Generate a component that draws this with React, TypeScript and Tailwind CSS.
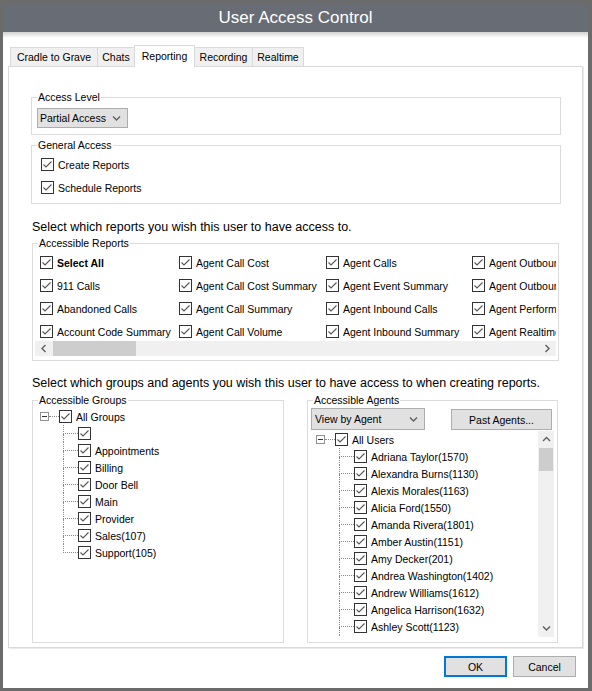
import React from "react";

const GROUPS = ["", "Appointments", "Billing", "Door Bell", "Main", "Provider", "Sales(107)", "Support(105)"];

const AGENTS = [
  "Adriana Taylor(1570)",
  "Alexandra Burns(1130)",
  "Alexis Morales(1163)",
  "Alicia Ford(1550)",
  "Amanda Rivera(1801)",
  "Amber Austin(1151)",
  "Amy Decker(201)",
  "Andrea Washington(1402)",
  "Andrew Williams(1612)",
  "Angelica Harrison(1632)",
  "Ashley Scott(1123)",
  "Austin Bennett(1144)",
];

// columns of the report grid, read top to bottom
const REPORTS = [
  ["Select All", "911 Calls", "Abandoned Calls", "Account Code Summary"],
  ["Agent Call Cost", "Agent Call Cost Summary", "Agent Call Summary", "Agent Call Volume"],
  ["Agent Calls", "Agent Event Summary", "Agent Inbound Calls", "Agent Inbound Summary"],
  ["Agent Outbound Calls", "Agent Outbound Summary", "Agent Performance", "Agent Realtime"],
];

function Box() {
  return (
    <svg width="13" height="13" viewBox="0 0 13 13" className="shrink-0">
      <rect x="0.5" y="0.5" width="12" height="12" fill="#fff" stroke="#333" />
      <path d="M2.5 6.5 L5 9 L10.5 3.5" fill="none" stroke="#555" strokeWidth="1.1" />
    </svg>
  );
}

function Check({ label, bold }: { label: string; bold?: boolean }) {
  return (
    <div className="flex items-center gap-[4px] h-[23px] whitespace-nowrap">
      <Box />
      <span className={bold ? "font-bold" : ""}>{label}</span>
    </div>
  );
}

function Chevron({ dir }: { dir: "down" | "up" | "left" | "right" }) {
  const d = {
    down: "M1 1.5 L4.5 5 L8 1.5",
    up: "M1 5 L4.5 1.5 L8 5",
    left: "M5.5 1 L2 4.5 L5.5 8",
    right: "M2.5 1 L6 4.5 L2.5 8",
  }[dir];
  const w = dir === "down" || dir === "up" ? 9 : 8;
  const h = dir === "down" || dir === "up" ? 7 : 9;
  return (
    <svg width={w} height={h} viewBox={`0 0 ${w} ${h}`} className="shrink-0">
      <path d={d} fill="none" stroke="#606060" strokeWidth="1.4" />
    </svg>
  );
}

function Expander() {
  return (
    <div className="w-[9px] h-[9px] border border-[#919191] bg-white flex items-center justify-center shrink-0">
      <div className="w-[5px] h-px bg-[#333]" />
    </div>
  );
}

function Tree({ root, items, lastOpen }: { root: string; items: string[]; lastOpen?: boolean }) {
  return (
    <div className="pl-[5px]">
      <div className="flex items-center h-[17px] whitespace-nowrap">
        <Expander />
        <div className="w-[10px] border-t border-dotted border-[#8a8a8a]" />
        <Box />
        <span className="ml-[4px]">{root}</span>
      </div>
      <div className="pl-[23px]">
        {items.map((name, i) => {
          const last = i === items.length - 1 && !lastOpen;
          return (
            <div key={i} className="flex items-center h-[17px] whitespace-nowrap">
              <div className="w-[15px] h-full flex flex-col shrink-0">
                <div className="h-[9px] border-l border-b border-dotted border-[#8a8a8a]" />
                <div className={`flex-1 ${last ? "" : "border-l border-dotted border-[#8a8a8a]"}`} />
              </div>
              <Box />
              <span className="ml-[4px]">{name}</span>
            </div>
          );
        })}
      </div>
    </div>
  );
}

function Tab({ label, w, active }: { label: string; w: string; active?: boolean }) {
  if (active) {
    return (
      <div className={`${w} h-[22px] -mb-px -ml-px relative z-10 bg-white border border-b-0 border-[#d9d9d9] flex items-start justify-center pt-[2px] whitespace-nowrap`}>
        {label}
      </div>
    );
  }
  return (
    <div className={`${w} h-[19px] -ml-px first:ml-0 bg-[#f0f0f0] border border-b-0 border-[#d9d9d9] flex items-center justify-center whitespace-nowrap`}>
      {label}
    </div>
  );
}

export default function App() {
  return (
    <div className="w-[592px] h-[691px] bg-[#6b6b6b] pt-[3px] pl-[3px] pr-[4px] pb-[3px] font-['Liberation_Sans',Arial,sans-serif] text-[10.5px] leading-[16px] text-black">
      <div className="h-full bg-white flex flex-col">
        {/* Title bar */}
        <div className="h-[29px] bg-[#686c74] flex items-center justify-center text-white text-[17px] leading-none">
          User Access Control
        </div>
        <div className="h-[6px] bg-linear-to-b from-[#d2d2d2] to-white" />
        <div className="h-[7px]" />

        {/* Tabs */}
        <div className="flex items-end h-[21px] ml-[7px]">
          <Tab label="Cradle to Grave" w="w-[88px]" />
          <Tab label="Chats" w="w-[38px]" />
          <Tab label="Reporting" w="w-[61px]" active />
          <Tab label="Recording" w="w-[59px]" />
          <Tab label="Realtime" w="w-[52px]" />
        </div>

        {/* Panel */}
        <div className="ml-[5px] w-[575px] h-[582px] border border-[#d9d9d9] bg-white shadow-[1px_1px_0_#ebebeb] flex flex-col">
          <fieldset className="ml-[22px] mt-[22px] w-[530px] min-w-0 h-[46px] border border-[#dcdcdc] px-[5px]">
            <legend className="px-[1px]">Access Level</legend>
            <div className="mt-[3px] w-[91px] h-[20px] bg-[#e1e1e1] border border-[#adadad] flex items-center justify-between pl-[2px] pr-[6px] whitespace-nowrap">
              <span>Partial Access</span>
              <Chevron dir="down" />
            </div>
          </fieldset>

          <fieldset className="ml-[22px] mt-[2px] w-[530px] min-w-0 h-[67px] border border-[#dcdcdc] px-[5px]">
            <legend className="px-[1px]">General Access</legend>
            <div className="pl-[4px]">
              <Check label="Create Reports" />
              <Check label="Schedule Reports" />
            </div>
          </fieldset>

          <div className="ml-[23px] mt-[15px] text-[12.5px]">Select which reports you wish this user to have access to.</div>

          <fieldset className="ml-[23px] w-[527px] min-w-0 h-[126px] border border-[#dcdcdc] px-[2px]">
            <legend className="ml-[3px] px-[1px]">Accessible Reports</legend>
            <div className="h-[90px] overflow-hidden pl-[5px]">
              <div className="flex">
                {REPORTS.map((col, i) => (
                  <div key={i} className={i === 0 ? "w-[139px] shrink-0" : i === 1 ? "w-[147px] shrink-0" : i === 2 ? "w-[146px] shrink-0" : "w-[160px] shrink-0"}>
                    {col.map((r) => (
                      <Check key={r} label={r} bold={r === "Select All"} />
                    ))}
                  </div>
                ))}
              </div>
            </div>
            <div className="h-[15px] bg-[#f0f0f0] flex items-center">
              <div className="w-[18px] flex justify-center">
                <Chevron dir="left" />
              </div>
              <div className="w-[83px] h-full bg-[#cdcdcd]" />
              <div className="flex-1" />
              <div className="w-[18px] flex justify-center">
                <Chevron dir="right" />
              </div>
            </div>
          </fieldset>

          <div className="ml-[23px] mt-[14px] text-[12.5px]">
            Select which groups and agents you wish this user to have access to when creating reports.
          </div>

          <div className="ml-[23px] mt-[1px] flex gap-[23px]">
            <fieldset className="w-[252px] min-w-0 h-[251px] border border-[#dcdcdc] px-[2px]">
              <legend className="ml-[3px] px-[1px]">Accessible Groups</legend>
              <Tree root="All Groups" items={GROUPS} />
            </fieldset>

            <fieldset className="w-[251px] min-w-0 h-[251px] border border-[#dcdcdc] px-[3px]">
              <legend className="ml-[2px] px-[1px]">Accessible Agents</legend>
              <div className="flex items-start">
                <div className="w-[114px] h-[22px] bg-[#e1e1e1] border border-[#adadad] flex items-center justify-between pl-[3px] pr-[6px] whitespace-nowrap">
                  <span>View by Agent</span>
                  <Chevron dir="down" />
                </div>
                <div className="ml-[26px] mt-[1px] w-[101px] h-[21px] bg-[#e1e1e1] border border-[#adadad] flex items-center justify-center">
                  Past Agents...
                </div>
              </div>
              <div className="mt-[1px] h-[206px] flex">
                <div className="flex-1 overflow-hidden">
                  <Tree root="All Users" items={AGENTS} lastOpen />
                </div>
                <div className="w-[16px] bg-[#f0f0f0] flex flex-col">
                  <div className="h-[17px] flex items-center justify-center">
                    <Chevron dir="up" />
                  </div>
                  <div className="h-[23px] mx-px bg-[#cdcdcd]" />
                  <div className="flex-1" />
                  <div className="h-[17px] flex items-center justify-center">
                    <Chevron dir="down" />
                  </div>
                </div>
              </div>
            </fieldset>
          </div>
        </div>

        {/* Buttons */}
        <div className="mt-[8px] flex justify-end gap-[6px] pr-[12px]">
          <div className="w-[63px] h-[21px] bg-[#e1e1e1] border-2 border-[#0078d7] flex items-center justify-center">OK</div>
          <div className="w-[63px] h-[21px] bg-[#e1e1e1] border border-[#adadad] flex items-center justify-center">Cancel</div>
        </div>
      </div>
    </div>
  );
}
